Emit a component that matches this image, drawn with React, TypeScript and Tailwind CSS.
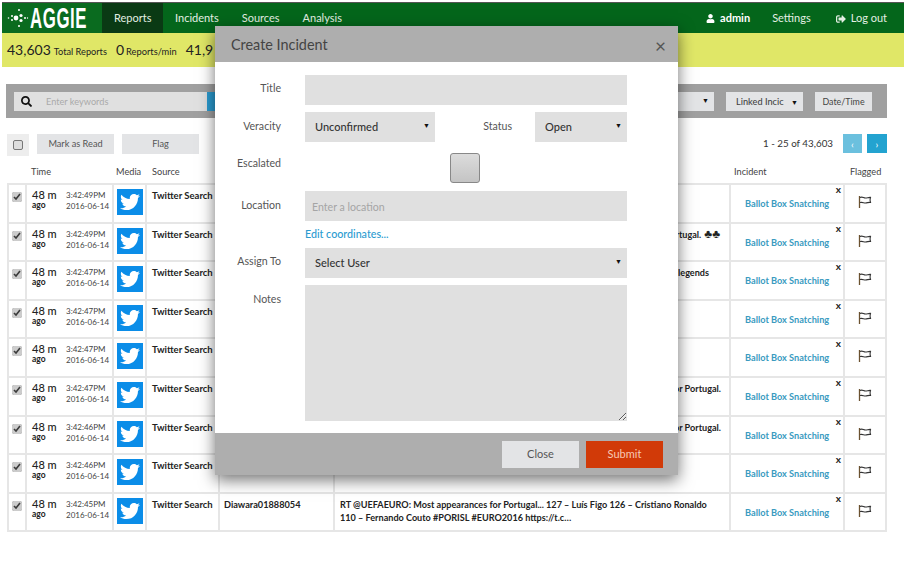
import { FaTwitter, FaUser, FaSearch, FaSignOutAlt } from 'react-icons/fa'

const rows = [
  { time: '3:42:49PM', tail: '', pad: 'pr-[7px]' },
  { time: '3:42:49PM', tail: 'Cristiano Ronaldo scores for Portugal.', pad: 'pr-[9px]', clubs: true },
  { time: '3:42:47PM', tail: 'One of the greatest Portuguese legends', pad: 'pr-[20px]' },
  { time: '3:42:47PM', tail: '', pad: 'pr-[7px]' },
  { time: '3:42:47PM', tail: '', pad: 'pr-[7px]' },
  { time: '3:42:47PM', tail: 'Most appearances for Portugal.', pad: 'pr-[8px]' },
  { time: '3:42:46PM', tail: 'Most appearances for Portugal.', pad: 'pr-[8px]' },
  { time: '3:42:46PM', tail: '', pad: 'pr-[7px]' },
  { time: '3:42:45PM', tail: '', pad: 'pr-[7px]' },
]

function FlagIcon() {
  return (
    <svg width="14" height="14" viewBox="0 0 14 14" fill="none" stroke="#333" strokeWidth="1.1">
      <path d="M1.5 1v12" stroke="#6b5230" strokeWidth="1.3" />
      <path d="M2 2.500c2.500-1.200 3.500.6 5.500.5 2 0 3-.8 5-.6-.6 1.600-.6 3 0 5-2-.3-3 .5-5 .6-2 0-3-1.200-5.500-.4" />
    </svg>
  )
}

function Logo() {
  return (
    <div className="flex items-center w-[100px] h-full pl-[5px] bg-[#0a6b1f]">
      <svg className="shrink-0" width="22" height="20" viewBox="0 0 22 20" fill="#fff">
        <circle cx="9" cy="10" r="2.400" />
        <circle cx="14" cy="7.500" r="1.600" />
        <circle cx="14" cy="12.500" r="1.600" />
        <circle cx="5" cy="8" r="1" />
        <circle cx="5" cy="12" r="1" />
        <circle cx="1.500" cy="10" r="0.800" />
        <circle cx="12" cy="2" r="1" />
        <circle cx="12" cy="18" r="1" />
        <circle cx="18" cy="10" r="1" />
        <circle cx="20.500" cy="10" r="0.700" />
      </svg>
      <span className="ml-[1px] text-[29px] leading-none font-bold text-white font-['Liberation_Sans',sans-serif] scale-x-[0.58] origin-left tracking-[1px] whitespace-nowrap">
        AGGIE
      </span>
    </div>
  )
}

function Row({ time, tail, pad, clubs, last }: { time: string; tail: string; pad: string; clubs?: boolean; last: boolean }) {
  return (
    <div className="flex h-[38.6px] border-b-2 border-[#e6e6e6] text-[#222]">
      <div className="w-[20px] pl-[3px] pt-[7px] border-x-2 border-[#e6e6e6]">
        <input type="checkbox" defaultChecked readOnly className="block w-[10px] h-[10px] accent-[#cccccc]" />
      </div>
      <div className="flex w-[85px] pl-[5px] pt-[3px]">
        <div className="w-[34px]">
          <div className="text-[11px] leading-[13px] font-medium">48 m</div>
          <div className="text-[8.500px] leading-[8px] font-bold">ago</div>
        </div>
        <div className="text-[8px] leading-[10px] text-[#444] pt-[2px] whitespace-nowrap">
          <div>{time}</div>
          <div className="mt-[1px]">2016-06-14</div>
        </div>
      </div>
      <div className="w-[35px] pl-[3px] pt-[4px] border-x-2 border-[#e6e6e6]">
        <div className="flex items-center justify-center w-[26px] h-[26px] bg-[#0b8de8]">
          <FaTwitter className="text-white text-[20px]" />
        </div>
      </div>
      <div className="w-[71px] pl-[5px] pt-[4px] text-[9.500px] leading-[13px] font-bold whitespace-nowrap overflow-hidden">
        Twitter Search
      </div>
      <div className="w-[117px] pl-[4px] pt-[4px] text-[9.200px] leading-[13px] font-bold border-x-2 border-[#e6e6e6]">
        {last ? 'Diawara01888054' : ''}
      </div>
      <div className={`w-[394px] pl-[5px] ${pad} pt-[4px] text-[9.100px] leading-[13px] font-bold`}>
        {last ? (
          <>
            RT @UEFAEURO: Most appearances for Portugal... 127 – Luís Figo 126 – Cristiano Ronaldo 110 – Fernando Couto
            #PORISL #EURO2016 https://t.c…
          </>
        ) : (
          <div className="text-right whitespace-nowrap">
            {tail}
            {clubs ? <span className="ml-[3px] text-[12px] leading-none">♣♣</span> : null}
          </div>
        )}
      </div>
      <div className="relative w-[116px] pl-[14px] pt-[12px] text-[9.200px] leading-[13px] font-bold text-[#3a9bbf] border-x-2 border-[#e6e6e6] whitespace-nowrap">
        Ballot Box Snatching
        <span className="absolute right-[2px] -top-[2px] text-[10px] leading-[12px] text-[#222]">x</span>
      </div>
      <div className="flex flex-1 justify-center pt-[10px] border-r-2 border-[#e6e6e6]">
        <FlagIcon />
      </div>
    </div>
  )
}

function ModalSelect({ label, width }: { label: string; width: string }) {
  return (
    <div className={`relative ${width}`}>
      <select className="w-full h-[30px] pl-[10px] pt-[1px] bg-[#e0e0e0] text-[11px] font-medium text-[#333] appearance-none outline-none">
        <option>{label}</option>
      </select>
      <span className="absolute right-[5px] top-[8px] text-[7px] text-[#111] pointer-events-none">▼</span>
    </div>
  )
}

function CreateIncident() {
  return (
    <div className="absolute left-[215px] top-[26px] w-[463px] h-[449px] flex flex-col bg-white shadow-[0_5px_15px_rgba(0,0,0,0.55)]">
      <div className="flex items-center justify-between h-[36px] pl-[16px] pr-[12px] pt-[2px] bg-[#aeaeae]">
        <span className="text-[14.400px] text-[#444]">Create Incident</span>
        <span className="text-[19px] leading-none text-[#555]">×</span>
      </div>
      <div className="flex-1 pt-[13px] text-[10.600px] text-[#555]">
        <div className="flex h-[30px]">
          <label className="w-[66px] pt-[6px] text-right">Title</label>
          <input className="ml-[24px] w-[322px] bg-[#e0e0e0] outline-none" />
        </div>
        <div className="flex h-[30px] mt-[7px]">
          <label className="w-[66px] pt-[7px] text-right">Veracity</label>
          <div className="ml-[24px]">
            <ModalSelect label="Unconfirmed" width="w-[130px]" />
          </div>
          <label className="w-[77px] pt-[7px] text-right">Status</label>
          <div className="ml-[23px]">
            <ModalSelect label="Open" width="w-[92px]" />
          </div>
        </div>
        <div className="flex h-[30px] mt-[11px]">
          <label className="w-[66px] pt-[3px] text-right">Escalated</label>
          <div className="ml-[169px] w-[30px] h-[30px] rounded-[3px] border border-[#888] bg-gradient-to-b from-[#dcdcdc] to-[#c4c4c4]" />
        </div>
        <div className="flex h-[30px] mt-[8px]">
          <label className="w-[66px] pt-[7px] text-right">Location</label>
          <input
            placeholder="Enter a location"
            className="ml-[24px] w-[322px] pl-[7px] pt-[3px] bg-[#e0e0e0] outline-none text-[10.600px] placeholder:text-[#a5a5a5]"
          />
        </div>
        <div className="ml-[90px] mt-[6px] h-[14px] text-[10.700px] leading-[14px] font-medium text-[#2a9bd0]">Edit coordinates...</div>
        <div className="flex h-[30px] mt-[7px]">
          <label className="w-[66px] pt-[6px] text-right">Assign To</label>
          <div className="ml-[24px]">
            <ModalSelect label="Select User" width="w-[322px]" />
          </div>
        </div>
        <div className="flex h-[136px] mt-[7px]">
          <label className="w-[66px] pt-[7px] text-right">Notes</label>
          <textarea className="block ml-[24px] w-[322px] h-[136px] bg-[#e0e0e0] outline-none" />
        </div>
      </div>
      <div className="flex justify-end gap-[7px] h-[42px] pt-[8px] pr-[15px] bg-[#aeaeae]">
        <button className="w-[77px] h-[27px] bg-[#e3e4e6] text-[11px] text-[#555]">Close</button>
        <button className="w-[77px] h-[27px] bg-[#d13a08] text-[11px] text-[#f7c9b5]">Submit</button>
      </div>
    </div>
  )
}

export default function App() {
  return (
    <div className="relative w-[904px] h-[569px] bg-white overflow-hidden font-['Lato',sans-serif]">
      <div className="pt-[2px] pl-[2px]">
        {/* Nav */}
        <div className="flex items-center h-[31px] border-t border-[#555] bg-[#04661b] text-[11px] text-[#e3efe3]">
          <Logo />
          <div className="flex items-center h-full pl-[12px] w-[61px] pt-[1px] bg-[#0a3a14]">Reports</div>
          <div className="ml-[12px] pt-[1px]">Incidents</div>
          <div className="ml-[23px] pt-[1px]">Sources</div>
          <div className="ml-[23px] pt-[1px]">Analysis</div>
          <div className="ml-auto flex items-center gap-[5px] pt-[1px] font-bold text-white">
            <FaUser className="text-[9px]" />
            admin
          </div>
          <div className="ml-[22px] pt-[1px]">Settings</div>
          <div className="ml-[25px] mr-[17px] flex items-center gap-[5px] pt-[1px]">
            <FaSignOutAlt className="text-[10px]" />
            Log out
          </div>
        </div>

        {/* Stats */}
        <div className="flex items-baseline h-[34px] pt-[6px] pl-[5px] bg-[#e0e767] text-[#222]">
          <span className="text-[14px]">43,603</span>
          <span className="ml-[3px] text-[9.200px]">Total Reports</span>
          <span className="ml-[9px] text-[14px]">0</span>
          <span className="ml-[2px] text-[9.300px]">Reports/min</span>
          <span className="ml-[9px] text-[14px]">41,9</span>
        </div>
      </div>

      <div className="px-[7px]">
        {/* Filter bar */}
        <div className="flex items-center h-[34px] mt-[17px] -ml-px px-[8px] w-[881px] bg-[#a0a0a0] text-[9.200px] text-[#444]">
          <div className="flex items-center w-[193px] h-[19px] pl-[7px] bg-[#e0e0e0]">
            <FaSearch className="text-[11px] text-[#111]" />
            <span className="ml-[14px] pt-[1px] text-[#aaa]">Enter keywords</span>
          </div>
          <div className="w-[40px] h-[19px] bg-[#2a9bd0]" />
          <div className="relative ml-auto w-[100px] h-[19px] bg-[#e3e4e6]">
            <span className="absolute right-[5px] top-[3px] text-[7px] text-[#111]">▼</span>
          </div>
          <div className="relative ml-[12px] w-[77px] h-[19px] pl-[10px] leading-[20px] bg-[#e3e4e6] font-medium">
            Linked Incic
            <span className="absolute right-[5px] top-[0px] text-[7px] text-[#111]">▼</span>
          </div>
          <div className="ml-[12px] mr-[7px] w-[57px] h-[19px] leading-[20px] text-center bg-[#e3e4e6] text-[8.900px]">Date/Time</div>
        </div>

        {/* Actions */}
        <div className="flex items-start w-[880px] h-[22px] mt-[16px] text-[9.200px] text-[#555]">
          <div className="flex items-center justify-center w-[22px] h-[22px] bg-[#ededed]">
            <span className="block w-[10px] h-[10px] rounded-[2px] border border-[#777] bg-[#ddd]" />
          </div>
          <button className="ml-[8px] w-[77px] h-[20px] bg-[#e3e4e6]">Mark as Read</button>
          <button className="ml-[8px] w-[77px] h-[20px] bg-[#e3e4e6]">Flag</button>
          <span className="ml-auto mt-[1px] text-[9.800px] leading-[16px] text-[#333]">1 - 25 of 43,603</span>
          <button className="ml-[10px] w-[19px] h-[19px] bg-[#6bc0de] text-[10px] leading-[16px] text-white">‹</button>
          <button className="ml-[5px] w-[20px] h-[19px] bg-[#23a3d0] text-[10px] leading-[16px] text-white">›</button>
        </div>

        {/* Table */}
        <div className="flex h-[28px] w-[880px] items-center pl-[24px] pt-[3px] text-[9.200px] text-[#444]">
          <span className="w-[85px]">Time</span>
          <span className="w-[36px]">Media</span>
          <span className="w-[582px]">Source</span>
          <span className="w-[116px]">Incident</span>
          <span>Flagged</span>
        </div>
        <div className="w-[880px] border-t-2 border-[#e6e6e6] -mt-[1px]">
          {rows.map((r, i) => (
            <Row key={i} time={r.time} tail={r.tail} pad={r.pad} clubs={r.clubs} last={i === rows.length - 1} />
          ))}
        </div>
      </div>

      <CreateIncident />
    </div>
  )
}
